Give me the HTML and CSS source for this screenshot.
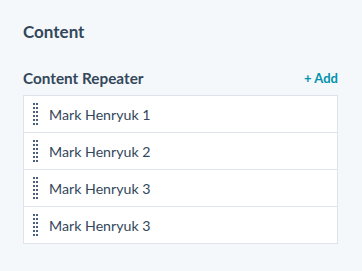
FILE: index.html
```html
<!DOCTYPE html>
<html>
    <head>
        <title>Content</title>
        <link rel="stylesheet" href="styles.css">
    </head>
    <body>
        <div class="panel">
            <h2 class="panel-title">Content</h2>

            <div class="repeater-head">
                <span class="repeater-label">Content Repeater</span>
                <a class="add-link" href="#">+ Add</a>
            </div>

            <ul class="repeater-list">
                <li class="repeater-item">
                    <span class="handle"></span>
                    <span class="item-name">Mark Henryuk 1</span>
                </li>
                <li class="repeater-item">
                    <span class="handle"></span>
                    <span class="item-name">Mark Henryuk 2</span>
                </li>
                <li class="repeater-item">
                    <span class="handle"></span>
                    <span class="item-name">Mark Henryuk 3</span>
                </li>
                <li class="repeater-item">
                    <span class="handle"></span>
                    <span class="item-name">Mark Henryuk 3</span>
                </li>
            </ul>
        </div>
    </body>
</html>
```

FILE: styles.css
```css
body {
    margin: 0;
    background-color: #f5f8fa;
    font-family: Lato, "Liberation Sans", sans-serif;
    color: #33475b;
}

.panel {
    padding: 21px 24px 0 23px;
}

.panel-title {
    margin: 0;
    font-size: 17px;
    font-weight: 700;
    line-height: 22px;
}

.repeater-head {
    display: flex;
    justify-content: space-between;
    align-items: center;
    margin-top: 25px;
    height: 20px;
}

.repeater-label {
    font-size: 15.3px;
    font-weight: 700;
}

.add-link {
    color: #0091ae;
    font-size: 13px;
    font-weight: 700;
    text-decoration: none;
}

.repeater-list {
    list-style: none;
    margin: 7px 0 0;
    padding: 0;
    background-color: #fff;
    border: 1px solid #dfe3eb;
}

.repeater-item {
    display: flex;
    align-items: center;
    height: 36px;
    padding-left: 9px;
}

.repeater-item + .repeater-item {
    border-top: 1px solid #dfe3eb;
}

/* two columns of dots */
.handle {
    width: 6px;
    height: 22px;
    background-image: linear-gradient(#4a6078 50%, transparent 50%);
    background-size: 100% 4px;
    -webkit-mask-image: linear-gradient(90deg, #000 2px, transparent 2px, transparent 3px, #000 3px, #000 5px, transparent 5px);
    mask-image: linear-gradient(90deg, #000 2px, transparent 2px, transparent 3px, #000 3px, #000 5px, transparent 5px);
}

.item-name {
    margin-left: 10px;
    font-size: 14.2px;
}
```
